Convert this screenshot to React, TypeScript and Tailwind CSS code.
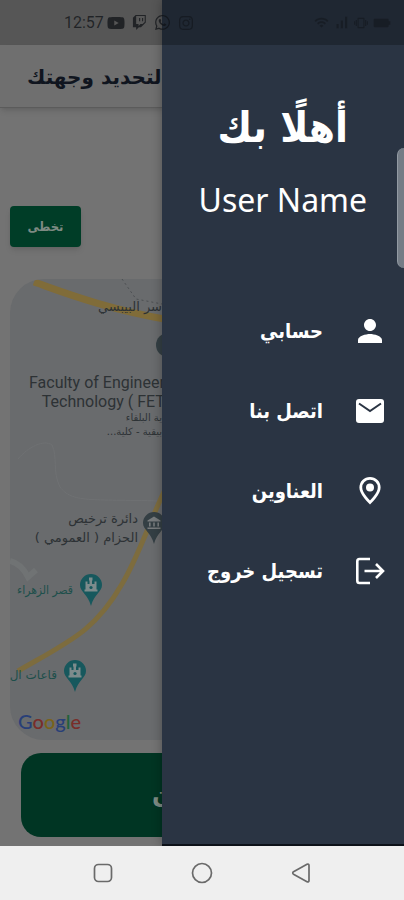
import type { ReactNode } from 'react';
import { FaInstagram, FaWhatsapp, FaYoutube } from 'react-icons/fa';
import { BsTwitch } from 'react-icons/bs';
import { MdPerson, MdWifi, MdSignalCellularAlt, MdVibration, MdBatteryFull } from 'react-icons/md';

const arabic = "font-['DejaVu_Sans',sans-serif]";
const arabicCondensed = "font-['DejaVu_Sans_Condensed','DejaVu_Sans',sans-serif]";

function MailIcon() {
  return (
    <svg width="36" height="36" viewBox="0 0 36 36" aria-hidden="true">
      <rect x="4" y="6" width="28" height="24" rx="3" fill="#fff" />
      <path d="M7 10.500 18 18l11-7.500" fill="none" stroke="#2a3443" strokeWidth="2" />
    </svg>
  );
}

function PlaceIcon() {
  return (
    <svg width="36" height="36" viewBox="0 0 36 36" aria-hidden="true">
      <path
        d="M18 5.300c-5.200 0-9.200 4-9.200 9.200 0 6.500 9.200 15 9.200 15s9.200-8.500 9.200-15c0-5.200-4-9.200-9.200-9.200Z"
        fill="none"
        stroke="#fff"
        strokeWidth="2.800"
      />
      <circle cx="18" cy="14.500" r="4" fill="#fff" />
    </svg>
  );
}

function LogoutIcon() {
  return (
    <svg width="36" height="36" viewBox="0 0 36 36" fill="none" stroke="#fff" strokeWidth="2.600" aria-hidden="true">
      <path d="M18 6H7.500Q5.300 6 5.300 8.200v19.600Q5.300 30 7.500 30H18" />
      <path d="M12.500 18H31M24 11l7 7-7 7" />
    </svg>
  );
}

function CastlePin() {
  return (
    <svg width="24" height="34" viewBox="0 0 24 34" aria-hidden="true">
      <path d="M12 1a11 11 0 0 0-11 11c0 7 8 9 11 21 3-12 11-14 11-21A11 11 0 0 0 12 1Z" fill="#17585d" />
      <path d="M5.500 18.500v-2h1V8.500h2V11h2V7.500h-.500V4.500h3.500v3H13V11h2.500V8.500h2v8h1v2Z" fill="#7d8b8c" />
      <circle cx="12" cy="14.500" r="1.600" fill="#17585d" />
    </svg>
  );
}

function BankPin() {
  return (
    <svg width="24" height="34" viewBox="0 0 24 34" aria-hidden="true">
      <path d="M12 1a11 11 0 0 0-11 11c0 7 8 9 11 21 3-12 11-14 11-21A11 11 0 0 0 12 1Z" fill="#343f44" />
      <path d="M5.500 9.500 12 5.500l6.500 4v1h-13ZM7 11.500h1.600v4H7Zm4.200 0h1.600v4h-1.600Zm4.200 0H17v4h-1.600ZM5.500 16.500h13V18h-13Z" fill="#777b7d" />
    </svg>
  );
}

function MapRoads() {
  return (
    <svg className="absolute left-0 top-0" width="160" height="462" viewBox="0 0 160 462" fill="none" aria-hidden="true">
      <path d="M0 282c8 2 14 8 18 16l8-7" stroke="#707374" strokeWidth="6" />
      <path d="M8 180c10-12 26-20 34-14 6 12 0 26 8 42 12 16 30 12 100 14" stroke="#6f7173" />
      <path d="M112 0l14 20 26 5" stroke="#4c4f52" strokeDasharray="2 3" />
      <path d="M24 3C50 12 95 30 160 41" stroke="#806c39" strokeWidth="7" />
      <path d="M160 200C140 240 130 275 112 305C85 352 60 362 8 392" stroke="#7d6c3e" strokeWidth="5" />
    </svg>
  );
}

function MapPanel() {
  return (
    <section aria-label="Map" className="relative ml-[10px] mt-8 h-[461px] overflow-hidden rounded-[34px] bg-[#696b6d] text-[#2d3235]">
      <MapRoads />
      <span dir="rtl" className={`absolute left-[88px] top-4 whitespace-nowrap text-[13px] leading-6 ${arabic}`}>سر البيبسي</span>
      <span className="absolute left-[146px] top-[54px] size-6 rounded-full bg-[#343f44]" />
      <p className="absolute left-[19px] top-[94px] whitespace-nowrap text-right font-[Roboto,sans-serif] text-[16px] leading-[19px]">
        Faculty of Engineer
        <br />
        Technology ( FET
      </p>
      <p dir="rtl" className={`absolute left-[96px] top-[132px] w-[56px] whitespace-nowrap text-[10px] leading-[14px] ${arabic}`}>
        ية البلقاء
        <br />
        بيقية - كلية...
      </p>
      <p dir="rtl" className={`absolute left-[14px] top-[230px] w-[114px] whitespace-nowrap text-[13px] leading-[19px] ${arabic}`}>
        دائرة ترخيص
        <br />
        الحزام ( العمومي )
      </p>
      <span className="absolute left-[132px] top-[232px]"><BankPin /></span>
      <span dir="rtl" className={`absolute left-0 top-[301px] w-[63px] whitespace-nowrap text-[12px] leading-5 text-[#1d4f4b] ${arabicCondensed}`}>قصر الزهراء</span>
      <span className="absolute left-[69px] top-[294px]"><CastlePin /></span>
      <span dir="rtl" className={`absolute left-0 top-[386px] w-[47px] whitespace-nowrap text-[12px] leading-5 text-[#1d4f4b] ${arabic}`}>قاعات ال</span>
      <span className="absolute left-[53px] top-[380px]"><CastlePin /></span>
      <span className="absolute left-2 top-[430px] font-[Lato,sans-serif] text-[20px] leading-6 font-medium">
        <span className="text-[#283f78]">G</span>
        <span className="text-[#792d29]">o</span>
        <span className="text-[#7b6319]">o</span>
        <span className="text-[#283f78]">g</span>
        <span className="text-[#21623a]">l</span>
        <span className="text-[#792d29]">e</span>
      </span>
    </section>
  );
}

function MenuItem({ label, icon }: { label: string; icon: ReactNode }) {
  return (
    <li>
      <button type="button" className="flex h-20 w-full items-center gap-[29px] pr-4 text-[20px] font-bold">
        {icon}
        <span>{label}</span>
      </button>
    </li>
  );
}

function Drawer() {
  return (
    <aside dir="rtl" className={`absolute inset-y-0 right-0 w-3/5 border-b-2 border-[#0c1118] bg-[#2a3443] pt-[98px] text-white shadow-[0_0_10px_rgba(0,0,0,0.3)] ${arabicCondensed}`}>
      <h2 className="text-center text-[42px] leading-[60px] font-bold">أهلًا بك</h2>
      <p dir="ltr" className="mt-4 text-center font-['Noto_Sans',sans-serif] text-[32px] leading-[52px]">User Name</p>
      <nav aria-label="القائمة" className="mt-[65px]">
        <ul>
          <MenuItem label="حسابي" icon={<MdPerson size={36} />} />
          <MenuItem label="اتصل بنا" icon={<MailIcon />} />
          <MenuItem label="العناوين" icon={<PlaceIcon />} />
          <MenuItem label="تسجيل خروج" icon={<LogoutIcon />} />
        </ul>
      </nav>
      <div className="absolute right-0 top-[148px] h-[120px] w-[7px] rounded-l-lg border-l border-[#929aa3] bg-[#747c86]" />
    </aside>
  );
}

function StatusBar() {
  return (
    <div className="absolute inset-x-0 top-0 flex h-[45px] items-center justify-between bg-black/25 pl-16 pr-3 text-[#101317]/75">
      <div className="flex items-center gap-[7px]">
        <span className="-mr-1 font-[Roboto,sans-serif] text-[16px] leading-5">12:57</span>
        <FaYoutube size={18} />
        <BsTwitch size={15} />
        <FaWhatsapp size={17} />
        <FaInstagram size={16} className="opacity-70" />
      </div>
      <div className="flex items-center gap-1 opacity-60">
        <MdWifi size={15} />
        <MdSignalCellularAlt size={17} />
        <MdVibration size={14} />
        <MdBatteryFull size={20} className="rotate-90" />
      </div>
    </div>
  );
}

export default function App() {
  return (
    <div className="flex min-h-screen flex-col bg-[#737373]">
      <div className="relative flex-1 overflow-hidden pb-[9px] pt-[45px]">
        <header className="h-[63px] border-b border-[#5b5b5b] bg-[#6f6f6f] shadow-md">
          <h1 dir="rtl" className={`w-2/5 whitespace-nowrap text-[20px] leading-[64px] font-bold text-[#10151f] ${arabic}`}>لتحديد وجهتك</h1>
        </header>
        <main>
          <button type="button" className={`ml-[10px] mt-[98px] block h-[41px] w-[71px] rounded bg-[#003d27] text-[13px] font-bold text-[#7d8a83] shadow-md ${arabicCondensed}`}>
            تخطى
          </button>
          <MapPanel />
          <button type="button" className={`ml-[21px] mr-5 mt-[13px] flex h-[84px] w-[calc(100%-41px)] items-center rounded-[20px] bg-[#003523] pl-[131px] text-[24px] font-bold text-[#7d8a83] ${arabic}`}>
            ن
          </button>
        </main>
        <Drawer />
        <StatusBar />
      </div>
      <nav aria-label="System" className="flex h-[54px] items-center justify-center gap-[75px] bg-[#efefef] text-[#6a6a6a]">
        <button type="button" aria-label="Recent apps">
          <svg width="24" height="24" viewBox="0 0 24 24" fill="none" stroke="currentColor" strokeWidth="1.700">
            <rect x="3.500" y="3.500" width="17" height="17" rx="4" />
          </svg>
        </button>
        <button type="button" aria-label="Home">
          <svg width="24" height="24" viewBox="0 0 24 24" fill="none" stroke="currentColor" strokeWidth="1.700">
            <circle cx="12" cy="12" r="9.500" />
          </svg>
        </button>
        <button type="button" aria-label="Back">
          <svg width="24" height="24" viewBox="0 0 24 24" fill="none" stroke="currentColor" strokeWidth="1.700" strokeLinejoin="round">
            <path d="M18 3.300c1.200-.600 2 .1 2 1.200v15c0 1.100-.8 1.800-2 1.200L4.500 13.200c-1-.600-1-1.800 0-2.400Z" />
          </svg>
        </button>
      </nav>
    </div>
  );
}
